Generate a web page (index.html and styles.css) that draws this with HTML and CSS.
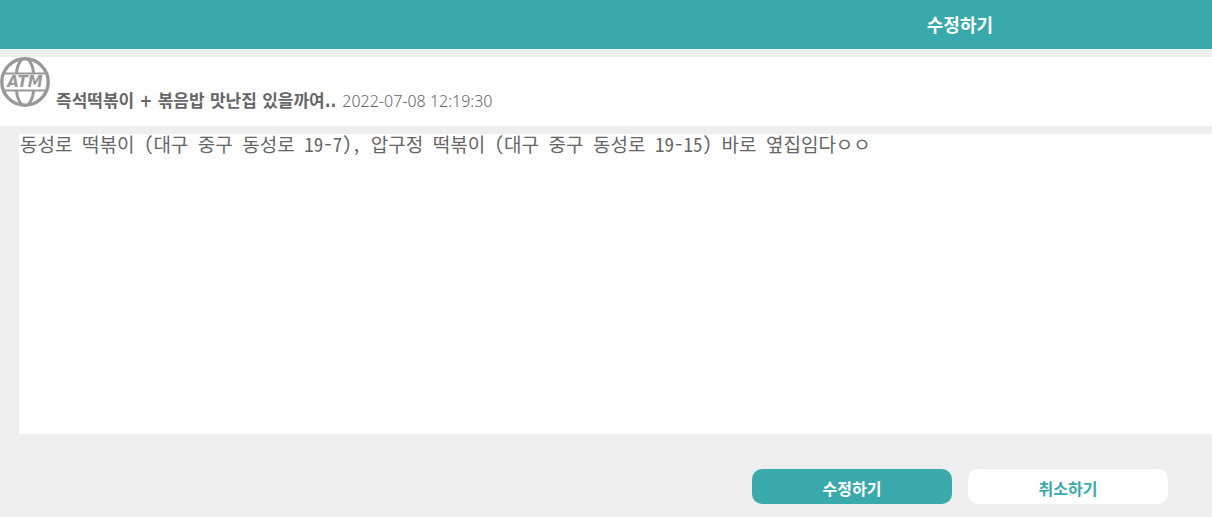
FILE: index.html
```html
<!DOCTYPE html>
<html lang="ko">
<head>
<meta charset="utf-8">
<title>수정하기</title>
<link rel="stylesheet" href="styles.css">
</head>
<body>
<header class="topbar"><h1 class="topbar-title">수정하기</h1></header>
<main>
  <section class="post">
    <svg class="logo" viewBox="0 0 50 50" role="img" aria-label="ATM">
      <g fill="none" stroke="#999" stroke-width="3">
        <circle cx="25" cy="25" r="23.2" stroke-width="3.4"/>
        <path d="M22 2C18.500 6 17 10 16.500 16M28 2C31.500 6 33 10 33.500 16M16.500 34C17 40 18.500 44 22 48M33.500 34C33 40 31.500 44 28 48"/>
        <path d="M5 16.500H45M5 33.500H45" stroke-width="2"/>
      </g>
      <text class="logo-text" x="25" y="30" text-anchor="middle">ATM</text>
    </svg>
    <h2 class="post-title">즉석떡볶이 + 볶음밥 맛난집 있을까여..</h2>
    <time class="post-date" datetime="2022-07-08T12:19:30">2022-07-08 12:19:30</time>
  </section>
  <form class="edit">
    <textarea class="edit-text" aria-label="내용" spellcheck="false">동성로 떡볶이 (대구 중구 동성로 19-7), 압구정 떡볶이 (대구 중구 동성로 19-15) 바로 옆집임다ㅇㅇ</textarea>
    <div class="actions">
      <button class="btn btn-primary" type="submit">수정하기</button>
      <button class="btn btn-plain" type="button">취소하기</button>
    </div>
  </form>
</main>
</body>
</html>
```
FILE: styles.css
```css
* { box-sizing: border-box; }
body {
  margin: 0;
  background: #eee;
  color: #666;
  font-family: "Noto Sans CJK KR", sans-serif;
  font-size: 16px;
}
.topbar {
  padding: 12px 0 13px 58.4%;
  background: #39a9ab;
  color: #fff;
  text-align: center;
}
.topbar-title {
  margin: 0;
  font-size: 18px;
  line-height: 24px;
  font-weight: 700;
}
.post {
  display: flex;
  align-items: flex-end;
  gap: 6px;
  margin: 8px 0;
  padding-bottom: 13px;
  background: #fff;
}
.logo {
  width: 50px;
  height: 50px;
  margin-bottom: 6px;
}
.logo-text {
  fill: #999;
  font: italic bold 15px "DejaVu Sans", sans-serif;
}
.post-title, .post-date {
  margin: 0;
  line-height: 24px;
}
.post-title {
  font-family: "DejaVu Sans Condensed", "Noto Sans CJK KR", sans-serif;
  font-size: 17px;
  font-weight: 700;
}
.post-date {
  font-family: "Noto Sans", sans-serif;
  font-size: 16px;
  font-weight: 300;
}
.edit { padding-left: 19px; }
.edit-text {
  display: block;
  width: 100%;
  height: 300px;
  padding: 0 1px;
  border: 0;
  outline: 0;
  resize: none;
  background: #fff;
  color: #666;
  font-family: "Noto Sans Mono CJK KR", "Liberation Mono", "Noto Sans CJK KR", monospace;
  font-size: 19px;
  line-height: 20px;
  font-weight: 300;
}
.actions {
  display: flex;
  justify-content: flex-end;
  gap: 16px;
  padding: 35px 44px 13px 0;
}
.btn {
  width: 200px;
  height: 35px;
  padding: 2px 0 0;
  border: 0;
  border-radius: 10px;
  font-family: inherit;
  font-size: 16px;
  line-height: 24px;
  font-weight: 700;
}
.btn-primary { background: #39a9ab; color: #fff; }
.btn-plain { background: #fff; color: #39a9ab; }
```
